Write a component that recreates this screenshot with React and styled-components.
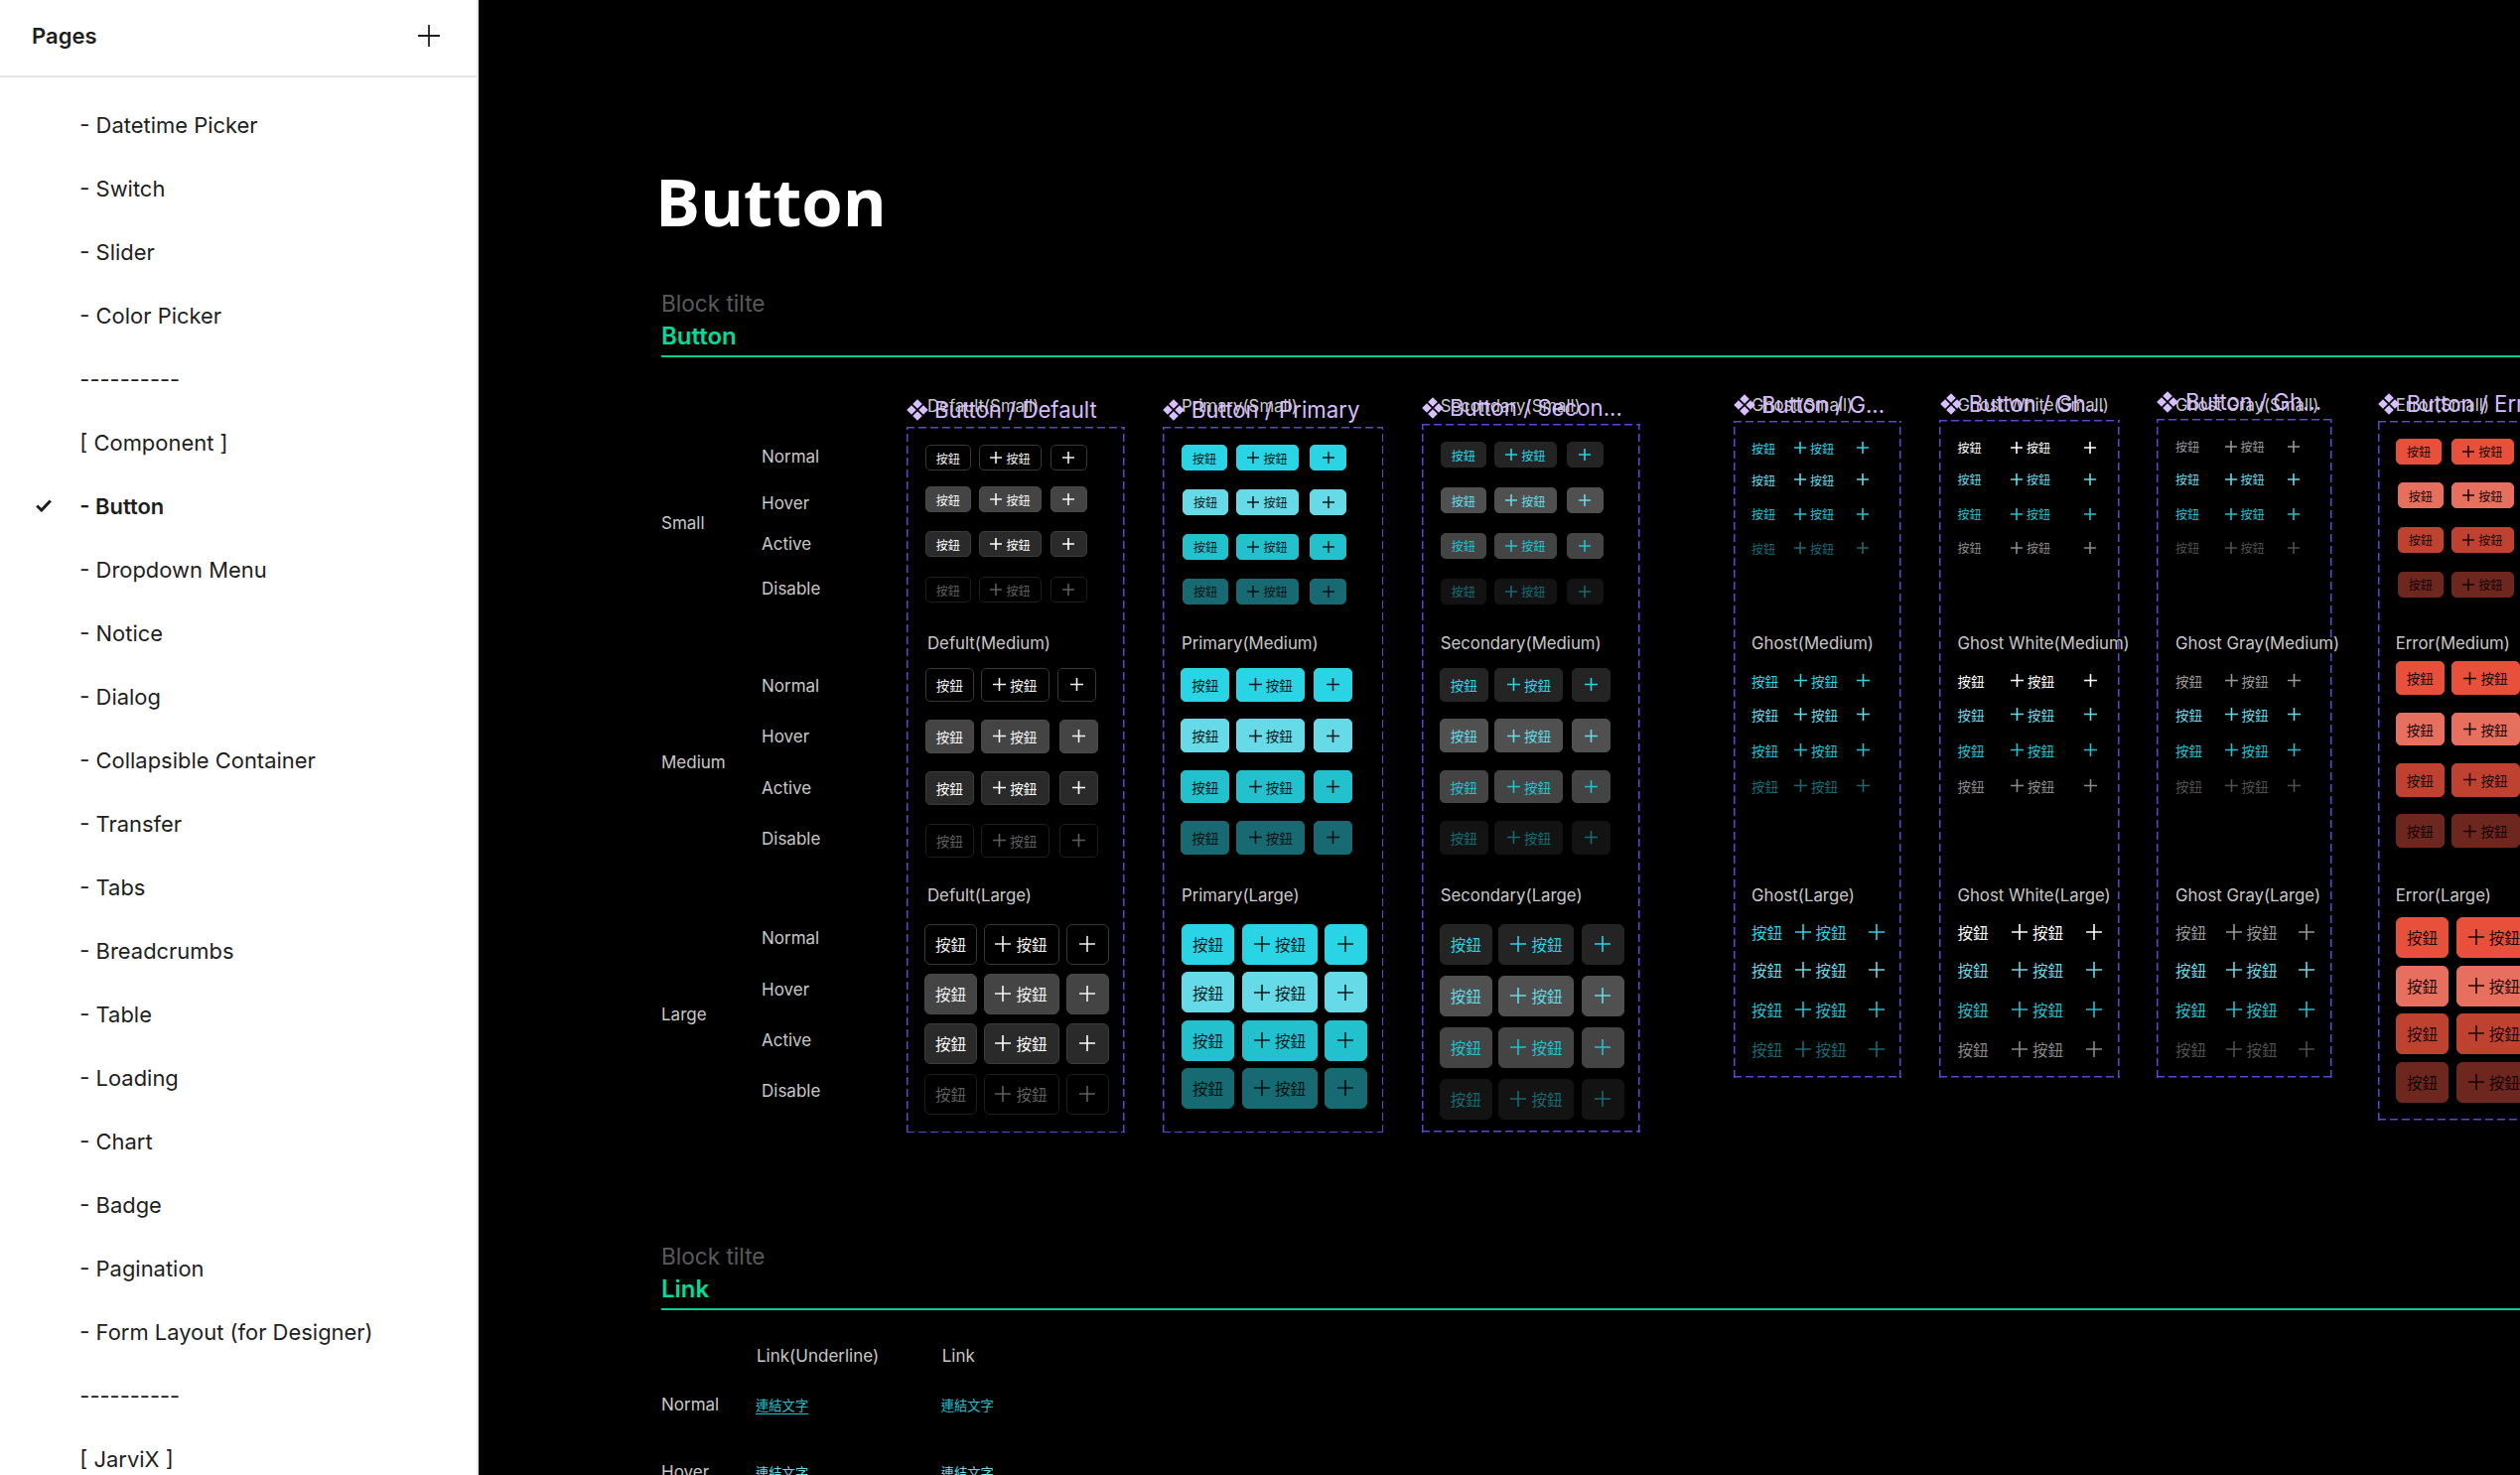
import React from 'react';
import styled, { createGlobalStyle, css } from 'styled-components';

const UI = '"Inter", "Noto Sans CJK TC", sans-serif';
const CJK = '"Noto Sans CJK TC", "Inter", sans-serif';
const BOARD_X = 666;
const BOARD_Y = 360;
const DASH = '#5c46d2';

const Global = createGlobalStyle`
  html, body { margin: 0; padding: 0; background: #000; }
  body { width: 2538px; height: 1486px; overflow: hidden; font-family: ${UI}; }
`;

const Page = styled.div`
  display: flex;
  width: 2538px;
  height: 1486px;
  overflow: hidden;
`;

/* ---------- sidebar ---------- */
const Sidebar = styled.aside`
  flex: 0 0 482px;
  box-sizing: border-box;
  height: 100%;
  background: #fff;
  border-right: 2px solid #e8e8e8;
  overflow: hidden;
`;
const SideHeader = styled.header`
  box-sizing: border-box;
  height: 78px;
  display: flex;
  align-items: center;
  justify-content: space-between;
  padding: 0 37px 4px 32px;
  border-bottom: 2px solid #e6e6e6;
`;
const SideTitle = styled.h2`
  margin: 0;
  font: 600 22px/26px ${UI};
  color: #1e1e1e;
`;
const PageList = styled.ul`
  list-style: none;
  margin: 0;
  padding: 15.7px 0 0 36px;
`;
const PageRow = styled.li`
  height: 64.03px;
  display: flex;
  align-items: center;
  font: ${(p) => (p.$active ? 600 : 400)} 21.95px/28px ${UI};
  color: #1e1e1e;
  white-space: pre;
`;
const CheckSlot = styled.span`
  flex: 0 0 44.3px;
  display: flex;
  align-items: center;
`;
const CheckSvg = styled.svg`
  width: 16px;
  height: 13px;
  fill: none;
  stroke: #1e1e1e;
  stroke-width: 3;
`;

/* ---------- canvas ---------- */
const Canvas = styled.main`
  flex: 1;
  min-width: 0;
  height: 100%;
  box-sizing: border-box;
  padding: 157px 0 0 ${BOARD_X - 482}px;
  background: #000;
  overflow: hidden;
  display: flex;
  flex-direction: column;
`;
const PageTitle = styled.h1`
  margin: 0 0 45px -6px;
  font: 700 67px/90px "Open Sans", sans-serif;
  color: #fff;
  white-space: nowrap;
`;
const BlockHeader = styled.header`
  display: flex;
  flex-direction: column;
`;
const BlockHint = styled.div`
  font: 400 22.6px/28px ${UI};
  color: #5a5a5a;
`;
const BlockName = styled.div`
  margin-top: 4.5px;
  font: 600 24px/28px ${UI};
  color: #00dc9c;
`;
const BlockRule = styled.div`
  margin-top: 5.5px;
  height: 2px;
  background: #00cf93;
`;
const Board = styled.section`
  position: relative;
  flex: 0 0 892px;
  overflow: visible;
`;

/* state / size label table left of the frames */
const StateTable = styled.div`
  padding-top: ${448 - BOARD_Y}px;
  display: flex;
  flex-direction: column;
`;
const SizeBlock = styled.div.attrs((p) => ({
  style: {
    marginTop: p.$mt,
    gridTemplateRows: p.$rows.map((r) => `${r}px`).join(' ') + ' 24px',
  },
}))`
  display: grid;
  grid-template-columns: 101px auto;
  justify-items: start;
`;
const SizeName = styled.div`
  grid-column: 1;
  grid-row: 1 / span 4;
  align-self: center;
  font: 400 17px/24px ${UI};
  color: #c8c8c8;
`;
const StateName = styled.div`
  grid-column: 2;
  font: 400 17px/24px ${UI};
  color: #c8c8c8;
`;

/* frames: component sets placed freely on the board */
const FrameNode = styled.div.attrs((p) => ({
  style: {
    left: p.$l - BOARD_X,
    top: p.$t - BOARD_Y,
    width: p.$r - p.$l,
    height: p.$b - p.$t,
  },
}))`
  position: absolute;
  box-sizing: border-box;
  background:
    repeating-linear-gradient(90deg, ${DASH} 0 8px, transparent 8px 12px) top left / 100% 1.5px no-repeat,
    repeating-linear-gradient(90deg, ${DASH} 0 8px, transparent 8px 12px) bottom left / 100% 1.5px no-repeat,
    repeating-linear-gradient(0deg, ${DASH} 0 8px, transparent 8px 12px) top left / 1.5px 100% no-repeat,
    repeating-linear-gradient(0deg, ${DASH} 0 8px, transparent 8px 12px) top right / 1.5px 100% no-repeat;
`;
const FrameBody = styled.div.attrs((p) => ({
  style: {
    marginTop: p.$mt,
    paddingLeft: p.$pl,
    gridTemplateRows: p.$rows.map((r) => `${r}px`).join(' '),
  },
}))`
  display: grid;
  justify-items: start;
  align-items: start;
`;
const VariantLabel = styled.div`
  font: 400 16.8px/24px ${UI};
  color: #c8c8c8;
  white-space: nowrap;
`;
const FrameTitle = styled.div.attrs((p) => ({
  style: { left: p.$x, top: p.$y },
}))`
  position: absolute;
  display: flex;
  align-items: center;
  gap: 6.6px;
  height: 30px;
  font: 400 22.2px/30px ${UI};
  color: #d6bcff;
  white-space: nowrap;
`;
const DiamondIcon = styled.svg`
  flex: none;
  width: 22px;
  height: 22px;
  fill: #d8bfff;
`;

const ButtonRow = styled.div.attrs((p) => ({
  style: {
    marginLeft: p.$ml,
    gridTemplateColumns: `${p.$xs[1] - p.$xs[0]}px ${p.$xs[2] - p.$xs[1]}px auto`,
  },
}))`
  display: grid;
  align-items: center;
  justify-items: start;
`;

const SIZES = {
  sm: { h: 26, w: [46, 63, 37], font: 12, plus: 12, gap: 4, radius: 5 },
  md: { h: 33.7, w: [49, 69, 39], font: 13.5, plus: 13, gap: 4, radius: 5 },
  lg: { h: 41, w: [53, 76, 43], font: 15.5, plus: 16, gap: 5, radius: 6 },
};

const PALETTE = {
  default: [
    { bg: '#000', bd: '#383838', fg: '#f0f0f0' },
    { bg: '#444', bd: '#4a4a4a', fg: '#f4f4f4' },
    { bg: '#2a2a2a', bd: '#3c3c3c', fg: '#fff' },
    { bg: '#000', bd: '#1e1e1e', fg: '#5e5e5e' },
  ],
  primary: [
    { bg: '#29d4e5', bd: '#29d4e5', fg: '#0c1c1e' },
    { bg: '#66dae6', bd: '#66dae6', fg: '#0c1c1e' },
    { bg: '#23c0ce', bd: '#23c0ce', fg: '#0c1c1e' },
    { bg: '#176a72', bd: '#176a72', fg: '#041214' },
  ],
  secondary: [
    { bg: '#242424', bd: '#242424', fg: '#29d4e5' },
    { bg: '#505050', bd: '#505050', fg: '#66dae6' },
    { bg: '#444', bd: '#444', fg: '#23c0ce' },
    { bg: '#131313', bd: '#131313', fg: '#176a72' },
  ],
  error: [
    { bg: '#e9503b', bd: '#e9503b', fg: '#1c0805' },
    { bg: '#e76f5e', bd: '#e76f5e', fg: '#1c0805' },
    { bg: '#bf4231', bd: '#bf4231', fg: '#1c0805' },
    { bg: '#6e271e', bd: '#6e271e', fg: '#130402' },
  ],
  ghost: [
    { fg: '#29d4e5' }, { fg: '#66dae6' }, { fg: '#23c0ce' }, { fg: '#176a72' },
  ],
  ghostWhite: [
    { fg: '#fff' }, { fg: '#66dae6' }, { fg: '#23c0ce' }, { fg: '#8a8a8a' },
  ],
  ghostGray: [
    { fg: '#999' }, { fg: '#66dae6' }, { fg: '#23c0ce' }, { fg: '#4f4f4f' },
  ],
};

const Btn = styled.button`
  display: inline-flex;
  align-items: center;
  justify-content: center;
  box-sizing: border-box;
  margin: 0;
  font-family: ${CJK};
  font-weight: 400;
  white-space: nowrap;
  color: ${(p) => p.$c.fg};
  font-size: ${(p) => p.$s.font}px;
  gap: ${(p) => p.$s.gap}px;
  ${(p) =>
    p.$ghost
      ? css`
          background: none;
          border: 0;
          padding: 0;
          height: 20px;
        `
      : css`
          background: ${p.$c.bg};
          border: 1.5px solid ${p.$c.bd};
          border-radius: ${p.$s.radius}px;
          padding: 0;
          height: ${p.$s.h}px;
          width: ${p.$w}px;
        `}
`;
const PlusSvg = styled.svg`
  width: ${(p) => p.$size}px;
  height: ${(p) => p.$size}px;
  stroke: currentColor;
  stroke-width: 1.6;
  fill: none;
  flex: none;
`;
const HeaderPlus = styled(PlusSvg)`
  color: #1e1e1e;
  stroke-width: 1.8;
`;

const PlusPath = () => <path d="M6 0V12M0 6H12" vectorEffect="non-scaling-stroke" />;
const Plus = ({ size }) => (
  <PlusSvg $size={size} viewBox="0 0 12 12"><PlusPath /></PlusSvg>
);
const Diamonds = () => (
  <DiamondIcon viewBox="0 0 22 22">
    <polygon points="11,0.2 15.8,5 11,9.8 6.2,5" />
    <polygon points="5,6.2 9.8,11 5,15.8 0.2,11" />
    <polygon points="17,6.2 21.8,11 17,15.8 12.2,11" />
    <polygon points="11,12.2 15.8,17 11,21.8 6.2,17" />
  </DiamondIcon>
);

const LABEL = '按鈕';

const Row = ({ kind, state, size, xs, ml }) => {
  const ghost = kind.startsWith('ghost');
  const s = SIZES[size];
  const common = { $c: PALETTE[kind][state], $s: s, $ghost: ghost };
  return (
    <ButtonRow $xs={xs} $ml={ml}>
      <Btn {...common} $w={s.w[0]}>{LABEL}</Btn>
      <Btn {...common} $w={s.w[1]}>
        <Plus size={s.plus} />
        {LABEL}
      </Btn>
      <Btn {...common} $w={s.w[2]}>
        <Plus size={s.plus} />
      </Btn>
    </ButtonRow>
  );
};

const expand = (tops, xs) =>
  tops.map((y) => (Array.isArray(y) ? { y: y[0], xs: y[1] } : { y, xs }));

const FRAMES = [
  {
    kind: 'default',
    box: [912.5, 430, 1132.5, 1141],
    title: 'Button / Default', iconX: 912.5, titleY: 398,
    labelX: 934, labels: ['Default(Small)', 'Defult(Medium)', 'Defult(Large)'],
    labelY: 397,
    sm: expand([448, 490, 535, 581], [931.7, 986, 1057.7]),
    md: expand([673, [725, [931.7, 987.7, 1067]], [777, [931.7, 987.7, 1067]], [830, [931.7, 987.7, 1067]]], [931.7, 987.7, 1065]),
    lg: expand([930.7, 981, 1031, 1082], [931, 990.5, 1073.6]),
  },
  {
    kind: 'primary',
    box: [1171, 430, 1393, 1141],
    title: 'Button / Primary', iconX: 1171.2, titleY: 398,
    labelX: 1190, labels: ['Primary(Small)', 'Primary(Medium)', 'Primary(Large)'],
    labelY: 397,
    sm: expand([[448, [1190, 1245, 1319]], 492.7, 537.7, 582.7], [1191, 1245, 1319]),
    md: expand([673, 724.3, 775.7, 827], [1189.3, 1245.3, 1322.5]),
    lg: expand([930.7, 979.3, 1027.7, 1076], [1190, 1251, 1333.8]),
  },
  {
    kind: 'secondary',
    box: [1431.5, 426.7, 1651.7, 1141],
    title: 'Button / Secon...', iconX: 1431.5, titleY: 396,
    labelX: 1450.7, labels: ['Secondary(Small)', 'Secondary(Medium)', 'Secondary(Large)'],
    labelY: 397,
    sm: expand([445, 491, 536.7, 582.7], [1450.7, 1504.7, 1578]),
    md: expand([673, 724.3, 775.7, 827], [1449.8, 1505.5, 1583]),
    lg: expand([930.7, 983, 1035, 1087], [1449.8, 1509.5, 1592.6]),
  },
  {
    kind: 'ghost',
    box: [1745.6, 424.3, 1915, 1086],
    title: 'Button / G...', iconX: 1745.5, titleY: 393,
    labelX: 1764, labels: ['Ghost(Small)', 'Ghost(Medium)', 'Ghost(Large)'],
    labelY: 396,
    sm: expand([441, 473, 507.7, 542.3], [1764, 1807, 1870]),
    md: expand([676, 710, 746, 781.7], [1764, 1807, 1870]),
    lg: expand([929, 967, 1007, 1047], [1764, 1807.6, 1881.7]),
  },
  {
    kind: 'ghostWhite',
    box: [1953, 423.3, 2134.7, 1086],
    title: 'Button / Gh...', iconX: 1954.2, titleY: 391.5,
    labelX: 1971.4, labels: ['Ghost White(Small)', 'Ghost White(Medium)', 'Ghost White(Large)'],
    labelY: 396,
    sm: expand([440.7, 473, 508, 542], [1971.4, 2025, 2099]),
    md: expand([676, 710, 746, 781.7], [1971.4, 2025, 2099]),
    lg: expand([929, 967, 1007, 1047], [1971.4, 2026, 2100.8]),
  },
  {
    kind: 'ghostGray',
    box: [2172.3, 422.3, 2348.6, 1086],
    title: 'Button / Gh...', iconX: 2172.5, titleY: 390,
    labelX: 2191, labels: ['Ghost Gray(Small)', 'Ghost Gray(Medium)', 'Ghost Gray(Large)'],
    labelY: 396,
    sm: expand([439.7, 473, 508, 542], [2191, 2240.6, 2303.7]),
    md: expand([676, 710, 746, 781.7], [2191, 2240.6, 2304]),
    lg: expand([929, 967, 1007, 1047], [2191, 2241.6, 2315]),
  },
  {
    kind: 'error',
    box: [2394.7, 424, 2700, 1128.7],
    title: 'Button / Error', iconX: 2395.2, titleY: 392,
    labelX: 2412.7, labels: ['Error(Small)', 'Error(Medium)', 'Error(Large)'],
    labelY: 396,
    sm: expand([[441.7, [2413, 2468.7, 2542]], 486.3, 531, 576], [2414.7, 2468.7, 2542]),
    md: expand([666.3, 717.7, 769, 820.3], [2412.7, 2469, 2548]),
    lg: expand([924, 972.7, 1021, 1069.7], [2413, 2473.8, 2560]),
  },
];

const Frame = ({ f }) => {
  const [l, t, r, b] = f.box;
  /* ordered children of the frame with the top of each grid track */
  const items = [];
  const groups = [
    ['sm', f.labels[0], f.labelY],
    ['md', f.labels[1], 636],
    ['lg', f.labels[2], 890],
  ];
  groups.forEach(([size, text, y]) => {
    items.push({ y, node: <VariantLabel key={size}>{text}</VariantLabel> });
    f[size].forEach((row, i) =>
      items.push({
        y: row.y,
        node: (
          <Row key={size + i} kind={f.kind} state={i} size={size} xs={row.xs} ml={row.xs[0] - f.labelX} />
        ),
      })
    );
  });
  const rows = items.map((it, i) => (i < items.length - 1 ? items[i + 1].y - it.y : 41));
  return (
    <FrameNode $l={l} $t={t} $r={r} $b={b}>
      <FrameBody $mt={f.labelY - t} $pl={f.labelX - l} $rows={rows}>
        {items.map((it) => it.node)}
      </FrameBody>
      <FrameTitle $x={f.iconX - l} $y={f.titleY - t}>
        <Diamonds />
        {f.title}
      </FrameTitle>
    </FrameNode>
  );
};

/* link table */
const LinkGrid = styled.div`
  display: grid;
  grid-template-columns: 96px 186.7px auto;
  grid-template-rows: 49px 68px 24px;
  margin-top: ${1354 - 1320}px;
  justify-items: start;
  align-items: start;
`;
const LinkHead = styled.div`
  grid-row: 1;
  grid-column: ${(p) => p.$col};
  font: 400 17px/24px ${UI};
  color: #c8c8c8;
`;
const LinkState = styled.div`
  grid-row: ${(p) => p.$row};
  grid-column: 1;
  font: 400 17px/24px ${UI};
  color: #c8c8c8;
`;
const LinkText = styled.a`
  grid-row: ${(p) => p.$row};
  grid-column: ${(p) => p.$col};
  margin: 3px 0 0 -1px;
  font: 400 13.3px/20px ${CJK};
  color: ${(p) => p.$color};
  text-decoration: ${(p) => (p.$under ? 'underline' : 'none')};
  text-underline-offset: 3px;
  white-space: nowrap;
`;

const PAGES = [
  '- Datetime Picker', '- Switch', '- Slider', '- Color Picker', '----------',
  '[ Component ]', '- Button', '- Dropdown Menu', '- Notice', '- Dialog',
  '- Collapsible Container', '- Transfer', '- Tabs', '- Breadcrumbs', '- Table',
  '- Loading', '- Chart', '- Badge', '- Pagination', '- Form Layout (for Designer)',
  '----------', '[ JarviX ]',
];

const STATE_BLOCKS = [
  { name: 'Small', mt: 0, rows: [47, 41, 45] },
  { name: 'Medium', mt: 73.5, rows: [51, 52, 51] },
  { name: 'Large', mt: 76, rows: [52, 51, 51] },
];
const STATES = ['Normal', 'Hover', 'Active', 'Disable'];

export default function App() {
  return (
    <>
      <Global />
      <Page>
        <Sidebar>
          <SideHeader>
            <SideTitle>Pages</SideTitle>
            <HeaderPlus $size={22} viewBox="0 0 12 12"><PlusPath /></HeaderPlus>
          </SideHeader>
          <PageList>
            {PAGES.map((name, i) => {
              const active = name === '- Button';
              return (
                <PageRow key={i} $active={active}>
                  <CheckSlot>
                    {active && (
                      <CheckSvg viewBox="0 0 16 13">
                        <path d="M1.2 6.5 L5.8 11 L14.8 1.5" />
                      </CheckSvg>
                    )}
                  </CheckSlot>
                  {name}
                </PageRow>
              );
            })}
          </PageList>
        </Sidebar>
        <Canvas>
          <PageTitle>Button</PageTitle>
          <BlockHeader>
            <BlockHint>Block tilte</BlockHint>
            <BlockName>Button</BlockName>
            <BlockRule />
          </BlockHeader>
          <Board>
            <StateTable>
              {STATE_BLOCKS.map((b) => (
                <SizeBlock key={b.name} $mt={b.mt} $rows={b.rows}>
                  <SizeName>{b.name}</SizeName>
                  {STATES.map((s) => (
                    <StateName key={s}>{s}</StateName>
                  ))}
                </SizeBlock>
              ))}
            </StateTable>
            {FRAMES.map((f) => (
              <Frame key={f.kind} f={f} />
            ))}
          </Board>
          <BlockHeader>
            <BlockHint>Block tilte</BlockHint>
            <BlockName>Link</BlockName>
            <BlockRule />
          </BlockHeader>
          <LinkGrid>
            <LinkHead $col={2}>Link(Underline)</LinkHead>
            <LinkHead $col={3}>Link</LinkHead>
            <LinkState $row={2}>Normal</LinkState>
            <LinkText $row={2} $col={2} $color="#23c0ce" $under>連結文字</LinkText>
            <LinkText $row={2} $col={3} $color="#23c0ce">連結文字</LinkText>
            <LinkState $row={3}>Hover</LinkState>
            <LinkText $row={3} $col={2} $color="#66dae6" $under>連結文字</LinkText>
            <LinkText $row={3} $col={3} $color="#66dae6">連結文字</LinkText>
          </LinkGrid>
        </Canvas>
      </Page>
    </>
  );
}
